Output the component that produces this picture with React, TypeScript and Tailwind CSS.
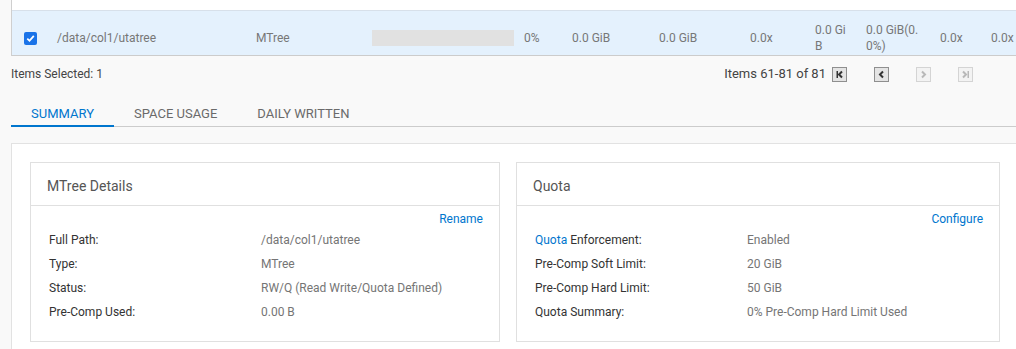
import React from "react";

const Chev = ({ dir, bar, color }: { dir: "l" | "r"; bar?: "l" | "r"; color: string }) => (
  <svg width="13" height="13" viewBox="0 0 13 13">
    {dir === "l" ? (
      <path d={bar ? "M9 3.5 L6 6.5 L9 9.5" : "M8 3.5 L5 6.5 L8 9.5"} stroke={color} strokeWidth="2" fill="none" />
    ) : (
      <path d={bar ? "M4 3.5 L7 6.5 L4 9.5" : "M5 3.5 L8 6.5 L5 9.5"} stroke={color} strokeWidth="2" fill="none" />
    )}
    {bar === "l" && <rect x="3.5" y="3" width="1.5" height="7" fill={color} />}
    {bar === "r" && <rect x="8.5" y="3" width="1.5" height="7" fill={color} />}
  </svg>
);

const PageBtn = ({ dir, bar, disabled }: { dir: "l" | "r"; bar?: "l" | "r"; disabled?: boolean }) => (
  <div
    className={
      disabled
        ? "w-[15px] h-[15px] flex items-center justify-center border border-[#d4d4d4] bg-[#f3f3f3]"
        : "w-[15px] h-[15px] flex items-center justify-center border border-[#8f8f8f] bg-[#e4e4e4]"
    }
  >
    <Chev dir={dir} bar={bar} color={disabled ? "#b8b8b8" : "#333"} />
  </div>
);

const Row = ({ label, value, labelBlue }: { label: string; value: string; labelBlue?: string }) => (
  <div className="flex h-[24px] items-center text-[12px] leading-[16px]">
    <div className="w-[212px] shrink-0 text-[#333]">
      {labelBlue && <span className="text-[#0076ce]">{labelBlue}</span>}
      {label}
    </div>
    <div className="text-[#757575]">{value}</div>
  </div>
);

const Card = ({
  title,
  action,
  width,
  children,
}: {
  title: string;
  action: string;
  width: string;
  children: React.ReactNode;
}) => (
  <div className={`${width} shrink-0 border border-[#e0e0e0] bg-white`}>
    <div className="h-[43px] border-b border-[#e0e0e0] pl-[16px] pt-[15px] text-[14px] leading-[16px] text-[#555]">
      {title}
    </div>
    <div className="pl-[18px] pr-[16px] pb-[17px]">
      <div className="h-[22px] pt-[3px] flex items-center justify-end text-[12px] text-[#0076ce]">{action}</div>
      {children}
    </div>
  </div>
);

export default function App() {
  return (
    <div className="w-[1016px] h-[349px] overflow-hidden bg-[#f9f9f9] font-['Roboto',sans-serif]">
      {/* table */}
      <div className="ml-[11px] border-l border-[#cfcfcf] overflow-hidden">
        <div className="h-[11px] bg-white border-b border-[#d7e0ea]" />
        <div className="h-[45px] pt-[10px] bg-[#e4f1fd] border-b border-[#cccccc] flex items-center text-[12px] leading-[16px] text-[#777]">
          <div className="w-[45px] shrink-0 pl-[12px] flex items-center">
            <div className="w-[13px] h-[13px] rounded-[2px] bg-[#1a73e8] flex items-center justify-center">
              <svg width="9" height="9" viewBox="0 0 9 9">
                <path d="M1.3 4.7 L3.5 6.8 L7.8 1.9" stroke="white" strokeWidth="1.8" fill="none" />
              </svg>
            </div>
          </div>
          <div className="w-[199px] shrink-0">/data/col1/utatree</div>
          <div className="w-[116px] shrink-0">MTree</div>
          <div className="w-[152px] shrink-0">
            <div className="w-[142px] h-[16px] bg-[#e1e1e1]" />
          </div>
          <div className="w-[48px] shrink-0">0%</div>
          <div className="w-[87px] shrink-0">0.0 GiB</div>
          <div className="w-[91px] shrink-0">0.0 GiB</div>
          <div className="w-[65px] shrink-0">0.0x</div>
          <div className="w-[51px] shrink-0 pr-[17px] break-all">0.0 GiB</div>
          <div className="w-[74px] shrink-0 pr-[18px] break-all">0.0 GiB(0.0%)</div>
          <div className="w-[51px] shrink-0">0.0x</div>
          <div className="w-[40px] shrink-0">0.0x</div>
        </div>
      </div>

      {/* selection / pagination bar */}
      <div className="h-[36px] ml-[11px] mr-[43px] flex items-center justify-between text-[12px] text-[#444]">
        <div>Items Selected: 1</div>
        <div className="flex items-center">
          <div className="mr-[6px] text-[13px]">Items 61-81 of 81</div>
          <div className="flex items-center gap-[27px]">
            <PageBtn dir="l" bar="l" />
            <PageBtn dir="l" />
            <PageBtn dir="r" disabled />
            <PageBtn dir="r" bar="r" disabled />
          </div>
        </div>
      </div>

      {/* tabs */}
      <div className="ml-[11px] border-b border-[#cccccc] flex text-[13px] leading-[16px]">
        <div className="px-5 pt-[14px] pb-[3px] border-b-2 border-[#0076ce] -mb-px text-[#0076ce]">SUMMARY</div>
        <div className="px-5 pt-[14px] pb-[3px] border-b-2 border-transparent -mb-px text-[#6a6a6a]">SPACE USAGE</div>
        <div className="px-5 pt-[14px] pb-[3px] border-b-2 border-transparent -mb-px text-[#6a6a6a]">DAILY WRITTEN</div>
      </div>

      {/* panel */}
      <div className="mt-[16px] ml-[11px] w-[1015px] border border-[#e2e2e2] bg-white pt-[18px] pl-[18px] pb-[20px]">
        <div className="flex gap-[16px]">
          <Card title="MTree Details" action="Rename" width="w-[470px]">
            <Row label="Full Path:" value="/data/col1/utatree" />
            <Row label="Type:" value="MTree" />
            <Row label="Status:" value="RW/Q (Read Write/Quota Defined)" />
            <Row label="Pre-Comp Used:" value="0.00 B" />
          </Card>
          <Card title="Quota" action="Configure" width="w-[484px]">
            <Row labelBlue="Quota" label=" Enforcement:" value="Enabled" />
            <Row label="Pre-Comp Soft Limit:" value="20 GiB" />
            <Row label="Pre-Comp Hard Limit:" value="50 GiB" />
            <Row label="Quota Summary:" value="0% Pre-Comp Hard Limit Used" />
          </Card>
        </div>
      </div>
    </div>
  );
}
